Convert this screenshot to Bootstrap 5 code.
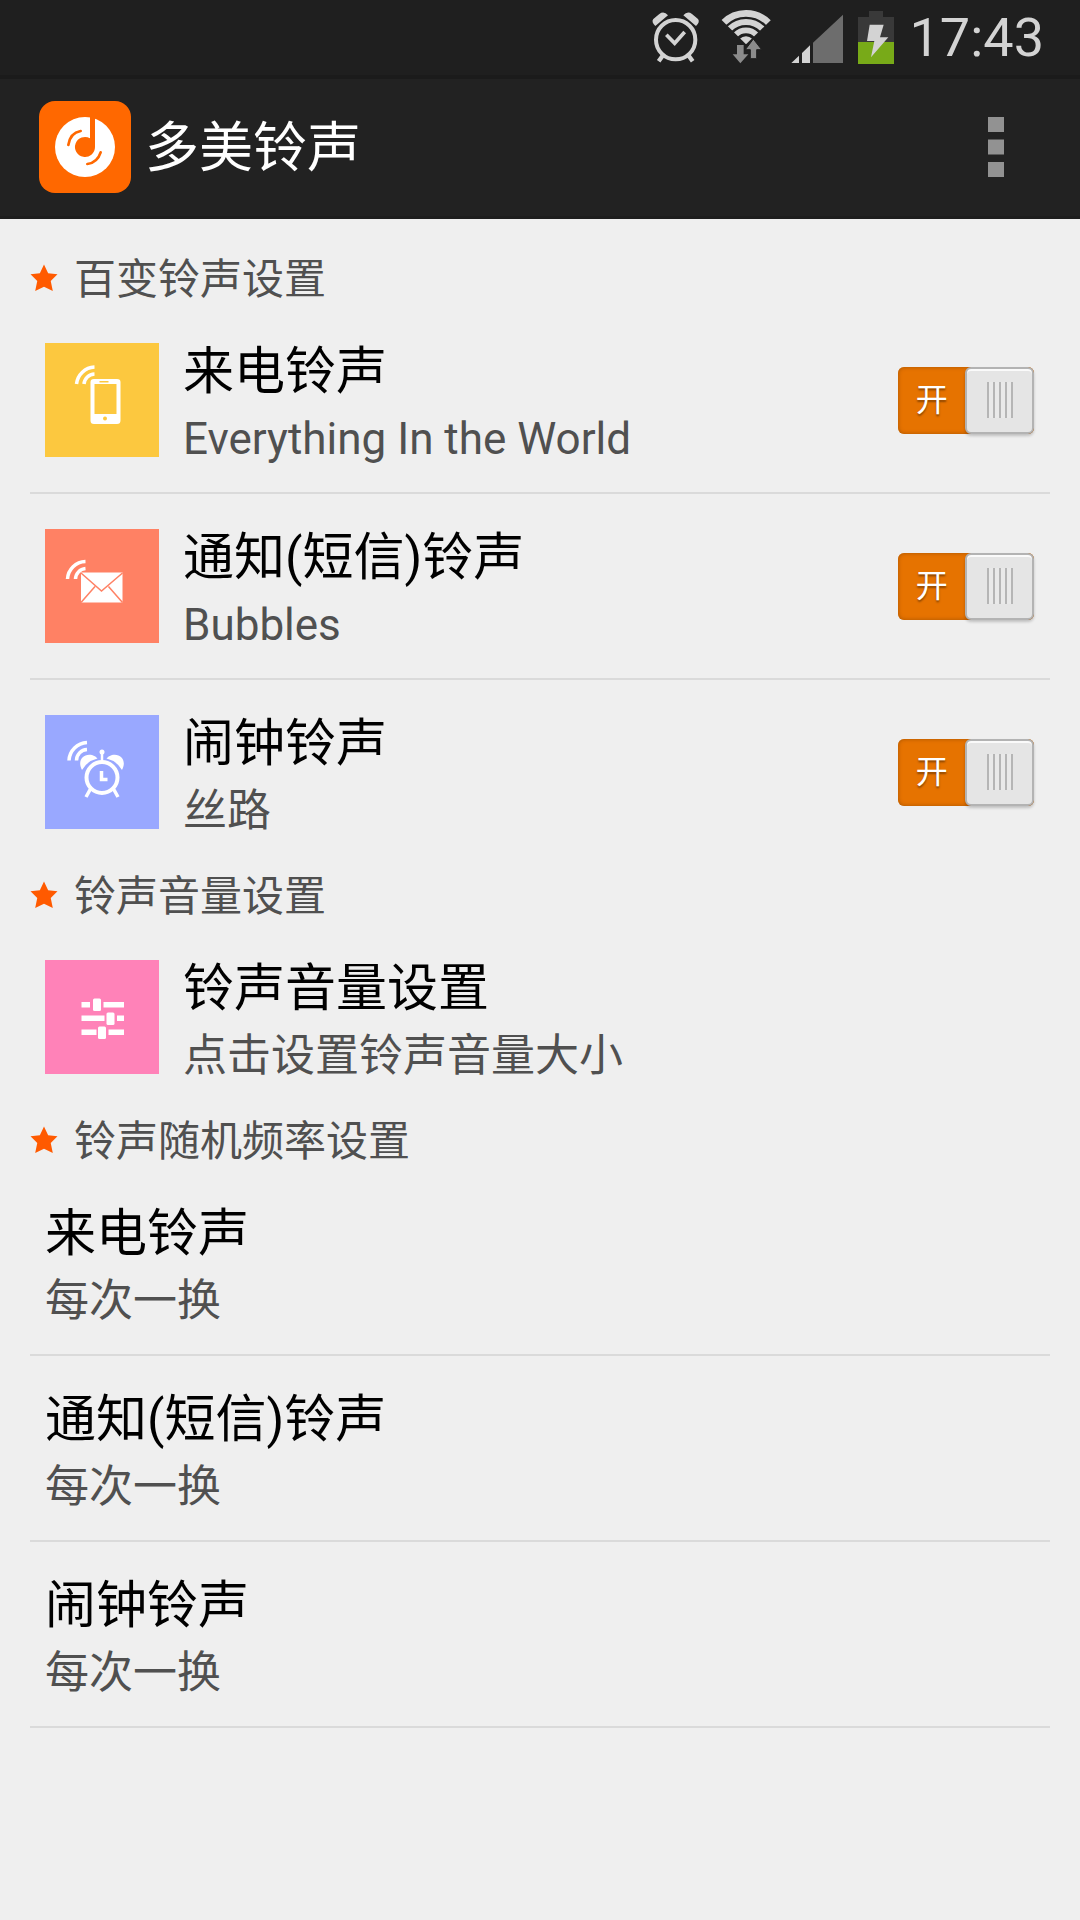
<!DOCTYPE html>
<html lang="zh-CN">
<head>
<meta charset="utf-8">
<meta name="viewport" content="width=device-width, initial-scale=1">
<title>多美铃声</title>
<link rel="stylesheet" href="https://cdn.jsdelivr.net/npm/bootstrap@5.3.0/dist/css/bootstrap.min.css">
<style>
  body { background: #efefef; color: #000; font-family: Roboto, "Noto Sans CJK SC", sans-serif; }
  svg { display: block; flex: none; }
  .status-bar { background: #1f1f1f; border-bottom: 4px solid #1b1b1b; height: 79px; padding-right: 36px; color: #d3d3d3; }
  .clock-text { font-size: 54px; line-height: 75px; margin-left: 8px; }
  .app-bar { background: #222; border-bottom: 3px solid #1e1e1e; height: 140px; padding: 0 64px 2px 39px; }
  .app-title { font-size: 54px; line-height: 80px; color: #fff; font-weight: 400; margin-left: 14px; padding-top: 4px; }
  .menu-btn { padding: 8px 12px; }
  main { padding: 28px 30px; }
  .section-head { font-size: 42px; line-height: 57px; color: #505050; font-weight: 400; gap: 16px; }
  .section-head span { padding-top: 4px; }
  .pref { min-height: 184px; padding: 0 16px 0 15px; color: #000; gap: 24px; }
  .pref.ruled { border-bottom: 2px solid #dadada; min-height: 186px; }
  .pref-title { font-size: 51px; line-height: 66px; }
  .pref-note { font-size: 44px; line-height: 68px; color: #505050; }
  .pref-text { padding-top: 12px; }
  .toggle { width: 136px; height: 67px; border-radius: 6px; background: #e67300; box-shadow: inset 0 0 4px #a85400; cursor: pointer; }
  .toggle-word { width: 68px; font-size: 32px; line-height: 66px; color: #fff; text-shadow: 0 2px 2px #8a4500; }
  .toggle-thumb { width: 69px; border-radius: 6px; background: #e5e5e5; border: 2px solid #b3b3b3; box-shadow: 0 2px 3px #0003, inset 0 2px 0 #fafafa; }
  .grip { width: 26px; height: 36px; background: repeating-linear-gradient(90deg, #b5b5b5 0 2px, #e9e9e9 2px 6px); }
</style>
</head>
<body>
<svg class="d-none" aria-hidden="true">
  <symbol id="star" viewBox="0 0 27 27"><path fill="#ff5a00" d="M13.500 0.500 17.500 9 26.500 10 20 16.500 22 26 13.500 22 5 26 7 16.500.500 10 9.500 9z"/></symbol>
</svg>

<div class="status-bar d-flex justify-content-end align-items-center gap-2">
  <svg width="56" height="75" viewBox="60 0 168 225" fill="none" stroke="#d3d3d3" aria-label="闹钟">
    <circle cx="137" cy="119" r="59" stroke-width="12"/>
    <path d="M109 104 134 130 164 96" stroke-width="11"/>
    <path d="M99 166 86 184M175 166 188 184" stroke-width="13"/>
    <path fill="#d3d3d3" stroke="none" d="M76 78 114 46Q102 32 88 42L70 57Q63 66 76 78zM198 78 160 46Q172 32 186 42L204 57Q211 66 198 78z"/>
  </svg>
  <svg width="64" height="75" viewBox="252 0 192 225" aria-label="无线网络">
    <clipPath id="fan"><path d="M348 133 262 47V0H436V47z"/></clipPath>
    <g clip-path="url(#fan)" fill="none" stroke="#d3d3d3" stroke-width="20">
      <circle cx="348" cy="135" r="95"/><circle cx="348" cy="135" r="69" stroke-width="18"/><circle cx="348" cy="135" r="44" stroke-width="17"/>
      <circle cx="348" cy="135" r="13" stroke-width="26"/>
    </g>
    <path fill="#8b8b8b" stroke="#1f1f1f" stroke-width="3" d="M370 117 395 149H380V176H361V149H346z"/>
    <path fill="#8b8b8b" d="M321 135H341V163H355L331 190 308 163H321z"/>
  </svg>
  <svg width="64" height="75" viewBox="468 0 192 225" aria-label="信号">
    <path fill="#d3d3d3" d="M484 189 507 167V189zM516 189V159L540 136V189z"/>
    <path fill="#6d6d6d" d="M549 189V128L639 44V189z"/>
  </svg>
  <svg width="36" height="75" viewBox="684 0 108 225" aria-label="充电中">
    <path fill="#393939" d="M717 33H759V51H792V126H684V51H717z"/>
    <path fill="#78aa18" d="M684 126H792V192H684z"/>
    <path fill="#d3d3d3" d="M719 74H761L750 112H775L723 172 733 123H711z"/>
  </svg>
  <span class="clock-text">17:43</span>
</div>

<header class="app-bar d-flex align-items-center">
  <svg width="92" height="92" viewBox="117 93 276 276" aria-hidden="true">
    <rect x="117" y="93" width="276" height="276" rx="48" fill="#ff6800"/>
    <circle cx="255" cy="231" r="90" fill="#fff"/>
    <path fill="#ff6800" d="M270 135H285V231A30 30 0 1 1 270 205z"/>
    <path fill="none" stroke="#ff6800" stroke-width="8" stroke-linecap="round" d="M205 225Q210 189 242 183M302 247Q292 278 262 282"/>
  </svg>
  <h1 class="app-title mb-0">多美铃声</h1>
  <button type="button" class="btn menu-btn border-0 ms-auto" aria-label="更多">
    <svg width="16" height="62" viewBox="0 0 16 62" fill="#929292"><path d="M0 1H16V16H0zM0 23.500H16V38.500H0zM0 46H16V61H0z"/></svg>
  </button>
</header>

<main>
  <section>
    <h2 class="section-head d-flex align-items-center mb-0"><svg width="28" height="28"><use href="#star"/></svg><span>百变铃声设置</span></h2>

    <div class="pref ruled d-flex align-items-center">
      <svg width="114" height="114" viewBox="0 0 114 114" aria-hidden="true">
        <path fill="#fcc83f" d="M0 0H114V114H0z"/>
        <path fill="none" stroke="#fff" stroke-width="3.500" d="M31.500 41A19 19 0 0 1 49.500 24M39 41A11 11 0 0 1 49.500 31"/>
        <path fill="#fff" fill-rule="evenodd" d="M49 36H72Q75.500 36 75.500 39V77.500Q75.500 81 72 81H49Q45.500 81 45.500 77.500V39Q45.500 36 49 36zM49.500 41V71H71.500V41zM54.500 38V39.500H63.500V38z"/>
        <circle cx="60" cy="75.500" r="2" fill="#fcc83f"/>
      </svg>
      <div class="pref-text flex-grow-1"><div class="pref-title">来电铃声</div><div class="pref-note">Everything In the World</div></div>
      <input type="checkbox" class="btn-check" id="sw-call" checked aria-label="来电铃声">
      <label class="toggle d-flex flex-shrink-0" for="sw-call"><span class="toggle-word text-center">开</span><span class="toggle-thumb d-flex align-items-center justify-content-center"><span class="grip"></span></span></label>
    </div>

    <div class="pref ruled d-flex align-items-center">
      <svg width="114" height="114" viewBox="0 0 114 114" aria-hidden="true">
        <path fill="#ff8164" d="M0 0H114V114H0z"/>
        <path fill="none" stroke="#fff" stroke-width="3.500" d="M22.500 50A18.500 18.500 0 0 1 40.500 32.500M30.500 50A11 11 0 0 1 40.500 39.500"/>
        <path fill="#fff" d="M36 43.500H77.500V73.500H36z"/>
        <path fill="none" stroke="#ff8164" stroke-width="1.500" d="M36 44 56.500 62 77.500 44M36 73.500 50 57.500M77.500 73.500 63.500 57.500"/>
      </svg>
      <div class="pref-text flex-grow-1"><div class="pref-title">通知(短信)铃声</div><div class="pref-note">Bubbles</div></div>
      <input type="checkbox" class="btn-check" id="sw-msg" checked aria-label="通知(短信)铃声">
      <label class="toggle d-flex flex-shrink-0" for="sw-msg"><span class="toggle-word text-center">开</span><span class="toggle-thumb d-flex align-items-center justify-content-center"><span class="grip"></span></span></label>
    </div>

    <div class="pref d-flex align-items-center">
      <svg width="114" height="114" viewBox="0 0 114 114" aria-hidden="true">
        <path fill="#99a8ff" d="M0 0H114V114H0z"/>
        <g fill="none" stroke="#fff" stroke-width="3.500">
          <path d="M24 45.500A19 19 0 0 1 42 27.500M31.500 45.500A11 11 0 0 1 42 34.500"/>
          <circle cx="57" cy="62.500" r="15.500" stroke-width="4"/>
          <path d="M56.500 56V64.500H62.500M46 73 41 82M68 73 73 82"/>
          <path d="M57 36V46" stroke-width="2.500"/>
        </g>
        <circle cx="57" cy="37" r="2.500" fill="#fff"/>
        <path fill="#fff" d="M37 55C32 46 38 38 47 40Q51 41 52.500 43.500Q42 46 37 55zM77 55C82 46 76 38 67 40Q63 41 61.500 43.500Q72 46 77 55z"/>
      </svg>
      <div class="pref-text flex-grow-1"><div class="pref-title">闹钟铃声</div><div class="pref-note">丝路</div></div>
      <input type="checkbox" class="btn-check" id="sw-alarm" checked aria-label="闹钟铃声">
      <label class="toggle d-flex flex-shrink-0" for="sw-alarm"><span class="toggle-word text-center">开</span><span class="toggle-thumb d-flex align-items-center justify-content-center"><span class="grip"></span></span></label>
    </div>
  </section>

  <section>
    <h2 class="section-head d-flex align-items-center mb-0"><svg width="28" height="28"><use href="#star"/></svg><span>铃声音量设置</span></h2>
    <a href="#volume" class="pref d-flex align-items-center text-decoration-none">
      <svg width="114" height="114" viewBox="0 0 114 114" aria-hidden="true">
        <path fill="#ff82b8" d="M0 0H114V114H0z"/>
        <path fill="#fff" d="M36.500 42H45V47.500H36.500zM58.500 42H79V47.500H58.500zM36.500 55.500H59.500V61H36.500zM72 55.500H79V61H72zM36.500 69.500H51.500V75H36.500zM63.500 69.500H79V75H63.500z"/>
        <g fill="#fff"><rect x="48" y="38.500" width="8" height="12.500" rx="1.500"/><rect x="61.500" y="52.500" width="8" height="12.500" rx="1.500"/><rect x="53" y="66.500" width="8" height="12.500" rx="1.500"/></g>
      </svg>
      <div class="pref-text flex-grow-1"><div class="pref-title">铃声音量设置</div><div class="pref-note">点击设置铃声音量大小</div></div>
    </a>
  </section>

  <section>
    <h2 class="section-head d-flex align-items-center mb-0"><svg width="28" height="28"><use href="#star"/></svg><span>铃声随机频率设置</span></h2>
    <a href="#call" class="pref ruled d-flex align-items-center text-decoration-none">
      <div class="pref-text"><div class="pref-title">来电铃声</div><div class="pref-note">每次一换</div></div>
    </a>
    <a href="#message" class="pref ruled d-flex align-items-center text-decoration-none">
      <div class="pref-text"><div class="pref-title">通知(短信)铃声</div><div class="pref-note">每次一换</div></div>
    </a>
    <a href="#alarm" class="pref ruled d-flex align-items-center text-decoration-none">
      <div class="pref-text"><div class="pref-title">闹钟铃声</div><div class="pref-note">每次一换</div></div>
    </a>
  </section>
</main>
<script src="https://cdn.jsdelivr.net/npm/bootstrap@5.3.0/dist/js/bootstrap.bundle.min.js"></script>
</body>
</html>
